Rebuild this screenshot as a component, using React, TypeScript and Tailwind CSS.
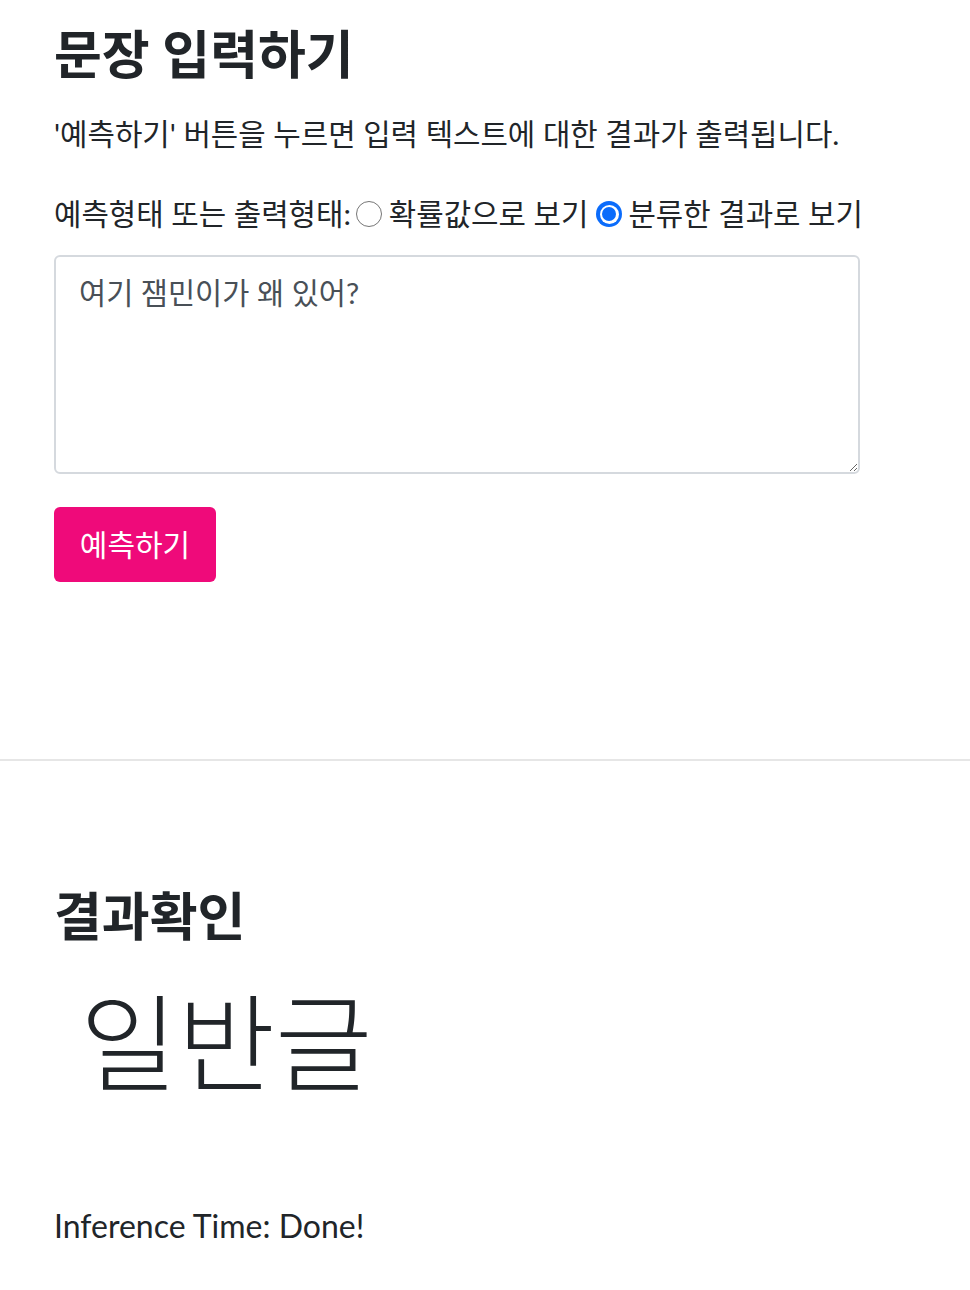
import React from 'react';

const font = "font-['Lato','Noto_Sans_CJK_KR',sans-serif]";

function Radio({ checked }: { checked?: boolean }) {
  if (checked) {
    return (
      <span className="flex h-[26px] w-[26px] shrink-0 items-center justify-center rounded-full bg-[#0b6cfb]">
        <span className="flex h-[19px] w-[19px] items-center justify-center rounded-full bg-white">
          <span className="h-[14px] w-[14px] rounded-full bg-[#0b6cfb]" />
        </span>
      </span>
    );
  }
  return <span className="block h-[26px] w-[26px] shrink-0 rounded-full border-[1.5px] border-[#767676] bg-white" />;
}

export default function App() {
  return (
    <div className={`${font} min-h-[1290px] bg-white text-[#212529]`}>
      <div className="px-[54px]">
        {/* 입력 영역 */}
        <h1 className="pt-[24px] text-[52px] font-bold leading-[60px]">문장 입력하기</h1>
        <p className="mt-[30px] text-[29.8px] leading-[40px]">'예측하기' 버튼을 누르면 입력 텍스트에 대한 결과가 출력됩니다.</p>

        <div className="mt-[40px] flex items-center text-[29.8px] leading-[40px]">
          <span>예측형태 또는 출력형태:</span>
          <span className="ml-[5px] mr-[7px] flex"><Radio /></span>
          <span>확률값으로 보기</span>
          <span className="ml-[8px] mr-[6px] flex"><Radio checked /></span>
          <span>분류한 결과로 보기</span>
        </div>

        <textarea
          className={`${font} mt-[21px] block h-[219px] w-[806px] rounded-[6px] border-2 border-[#d5d9de] px-[23px] pt-[16px] text-[29.5px] leading-[40px] text-[#495057] outline-none`}
          defaultValue="여기 잼민이가 왜 있어?"
        />

        <button className="mt-[33px] flex h-[75px] w-[162px] items-center justify-center rounded-[6px] bg-[#ef0a7a] text-[30px] text-white">
          예측하기
        </button>
      </div>

      <hr className="mt-[177px] border-t-2 border-[#e6e6e6]" />

      {/* 결과 영역 */}
      <div className="px-[54px]">
        <h2 className="mt-[125px] text-[52px] font-bold leading-[60px]">결과확인</h2>
        <div className="mt-[36px] pl-[26px] text-[106px] font-light leading-[120px]">일반글</div>
        <p className="mt-[104px] text-[32px] leading-[40px]">Inference Time: Done!</p>
      </div>
    </div>
  );
}
